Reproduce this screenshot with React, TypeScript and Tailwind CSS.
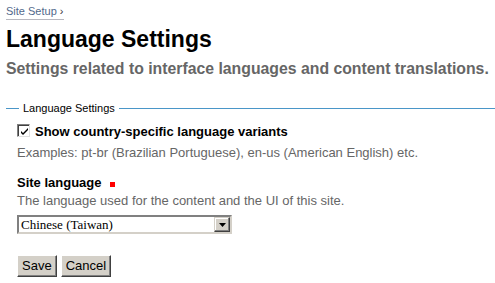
import { useState } from "react";

const LANGUAGES = ["Chinese (Taiwan)", "Chinese (China)", "English (USA)", "Portuguese (Brazil)"];

function ClassicCheckbox({ checked, onToggle }: { checked: boolean; onToggle: () => void }) {
  return (
    <span
      role="checkbox"
      aria-checked={checked}
      onClick={onToggle}
      className="inline-flex h-[13px] w-[13px] shrink-0 items-center justify-center border border-t-[#808080] border-l-[#808080] border-r-[#e0e0e0] border-b-[#e0e0e0] bg-white shadow-[inset_1px_1px_#404040]"
    >
      {checked && (
        <svg width="9" height="9" viewBox="0 0 9 9" className="ml-[1px] mt-[1px]">
          <path d="M1 4 L3 6 L8 1 L8 3 L3 8 L1 6 Z" fill="#000" />
        </svg>
      )}
    </span>
  );
}

function ClassicButton({ children }: { children: React.ReactNode }) {
  return (
    <button
      type="button"
      className="h-[22px] border border-t-white border-l-white border-r-[#404040] border-b-[#404040] bg-[#d4d0c8] px-[4px] text-[13px] leading-[18px] text-black shadow-[inset_-1px_-1px_#808080]"
    >
      {children}
    </button>
  );
}

export default function App() {
  const [showVariants, setShowVariants] = useState(true);
  const [language, setLanguage] = useState(LANGUAGES[0]);

  return (
    <div className="h-[283px] w-[495px] overflow-hidden bg-white pl-[6px] pt-[4px] font-['Liberation_Sans',Arial,sans-serif] text-black">
      <div className="text-[11px] leading-[14px]">
        <span className="inline-block border-b border-[#b8b8c0] pb-[1px]">
          <span className="text-[#52698c]">Site Setup</span> <span className="text-[#333]">›</span>
        </span>
      </div>

      <h1 className="mt-[6px] text-[23px] font-bold leading-[26px]">Language Settings</h1>
      <p className="mt-[8px] text-[15.8px] font-bold leading-[18px] text-[#666]">
        Settings related to interface languages and content translations.
      </p>

      <fieldset className="mt-[24px] border-t border-[#4a96c8]">
        <legend className="ml-[13px] px-[4px] text-[11px] leading-[13px]">Language Settings</legend>

        <div className="pl-[11px] pt-[9px]">
          <label className="flex items-start gap-[5px]">
            <ClassicCheckbox checked={showVariants} onToggle={() => setShowVariants(!showVariants)} />
            <span className="text-[13px] font-bold leading-[16px]">Show country-specific language variants</span>
          </label>
          <p className="mt-[5px] text-[13px] leading-[16px] text-[#666]">
            Examples: pt-br (Brazilian Portuguese), en-us (American English) etc.
          </p>

          <div className="mt-[14px] text-[13px] font-bold leading-[16px]">
            Site language
            <span className="ml-[8px] inline-block h-[5px] w-[5px] bg-[#f00]" title="Required" />
          </div>
          <p className="mt-[2px] text-[13px] leading-[16px] text-[#666]">
            The language used for the content and the UI of this site.
          </p>

          <div className="relative mt-[6px] w-[215px]">
            <select
              value={language}
              onChange={(event) => setLanguage(event.target.value)}
              className="block h-[19px] w-full appearance-none border-2 border-t-[#808080] border-l-[#808080] border-r-[#d4d0c8] border-b-[#d4d0c8] bg-white pl-[2px] font-['Liberation_Serif','Times_New_Roman',serif] text-[13px] leading-[15px] text-black outline-none"
            >
              {LANGUAGES.map((item) => (
                <option key={item}>{item}</option>
              ))}
            </select>
            <span className="pointer-events-none absolute right-[2px] top-[2px] flex h-[15px] w-[16px] items-center justify-center border border-t-[#d4d0c8] border-l-[#d4d0c8] border-r-[#404040] border-b-[#404040] bg-[#d4d0c8] shadow-[inset_-1px_-1px_#808080,inset_1px_1px_#fff]">
              <svg width="7" height="4" viewBox="0 0 7 4">
                <path d="M0 0 H7 L3.5 4 Z" fill="#000" />
              </svg>
            </span>
          </div>

          <div className="mt-[21px] flex gap-[4px]">
            <ClassicButton>Save</ClassicButton>
            <ClassicButton>Cancel</ClassicButton>
          </div>
        </div>
      </fieldset>
    </div>
  );
}
